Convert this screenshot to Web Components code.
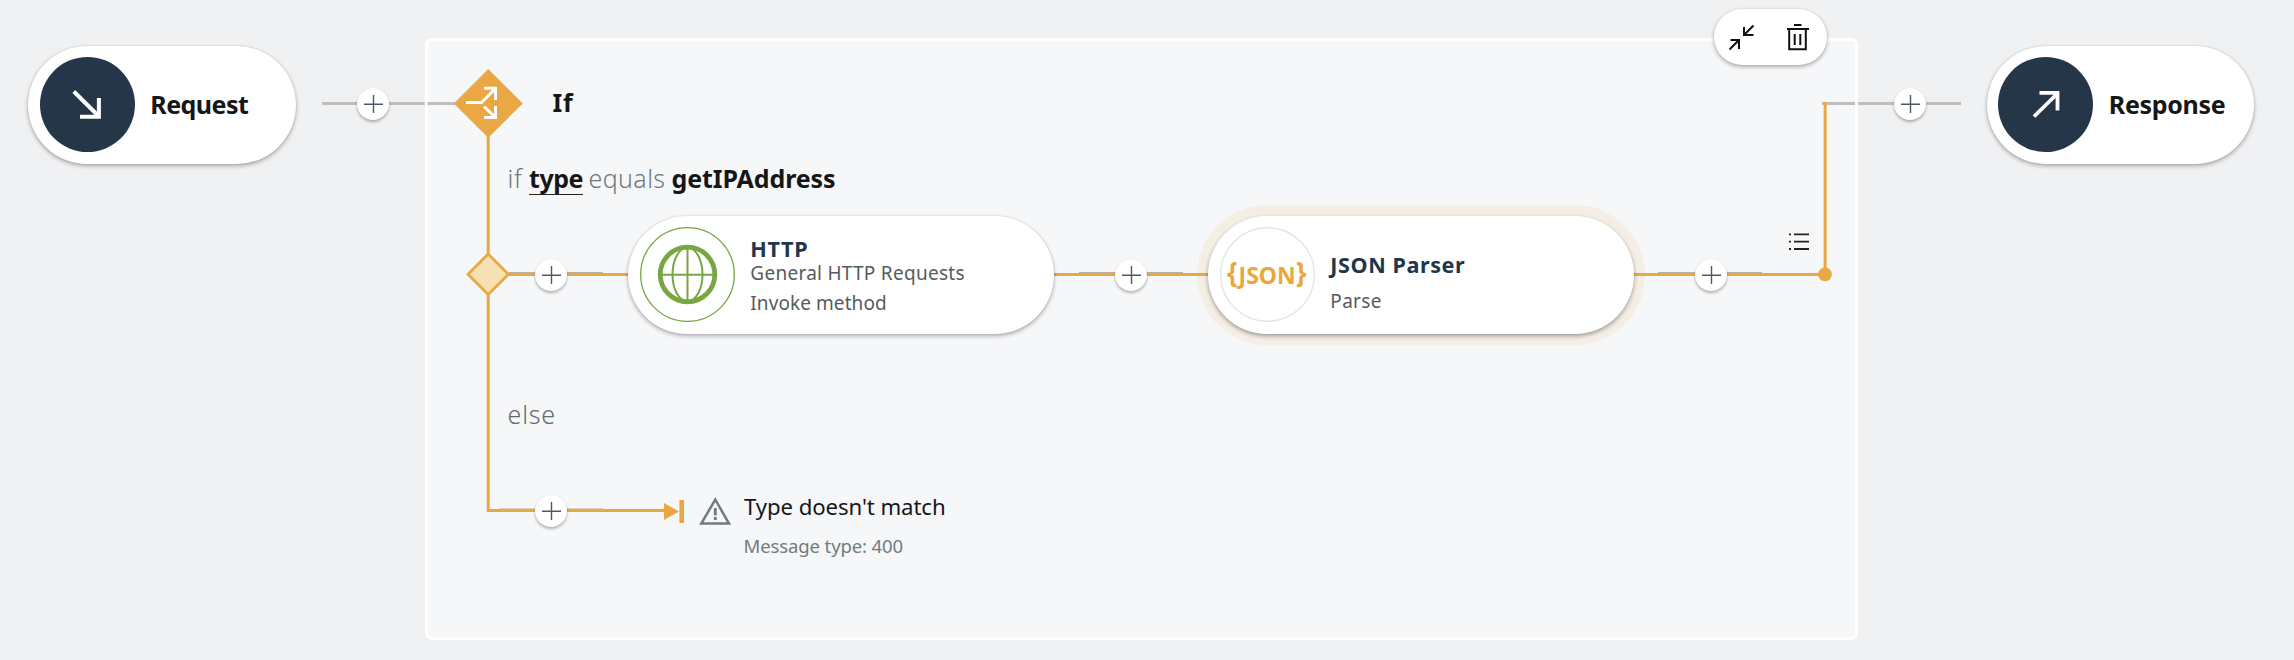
<!DOCTYPE html>
<html lang="en">
<head>
<meta charset="utf-8">
<title>Flow editor</title>
<style>
html,body{margin:0;background:#f0f1f3;}
body{width:2294px;height:660px;overflow:hidden;font-family:"Noto Sans",sans-serif;}
</style>
</head>
<body>
<flow-canvas>
  <flow-frame style="left:424.5px;top:38.3px;width:1433.5px;height:601.7px"></flow-frame>
  <flow-halo style="left:1197px;top:205px;width:447.5px;height:140px"></flow-halo>
  <flow-wires></flow-wires>

  <flow-node style="left:28px;top:46px;width:268px" kind="request">
    <fit-text size="25" w="98" weight="700" style="color:#161616;margin-top:46.4px">Request</fit-text>
  </flow-node>
  <flow-node style="left:1986.5px;top:46px;width:267.5px" kind="response">
    <fit-text size="25" w="116.5" weight="700" style="color:#161616;margin-top:46.4px">Response</fit-text>
  </flow-node>
  <flow-node style="left:628px;top:216px;width:425.5px" kind="http">
    <fit-text size="21.6" w="58" weight="700" style="color:#22364a;margin-top:22.2px">HTTP</fit-text>
    <fit-text size="19" w="214.5" style="color:#565b5c;margin-top:4px">General HTTP Requests</fit-text>
    <fit-text size="19" w="136.5" style="color:#565b5c;margin-top:11px">Invoke method</fit-text>
  </flow-node>
  <flow-node style="left:1208px;top:216px;width:425.5px" kind="json" selected>
    <fit-text size="21.6" w="135" weight="700" style="color:#22364a;margin-top:38px">JSON Parser</fit-text>
    <fit-text size="19" w="51.5" style="color:#565b5c;margin-top:16.4px">Parse</fit-text>
  </flow-node>

  <fit-text at style="left:552.5px;top:89.8px;color:#161616" size="25" w="21" weight="700">If</fit-text>
  <fit-text at style="left:507.5px;top:166px;color:#6f7979" size="25" w="15" weight="300">if</fit-text>
  <fit-text at style="left:529px;top:166px;color:#161616" size="25" w="54" weight="700" line>type</fit-text>
  <fit-text at style="left:588.5px;top:166px;color:#6f7979" size="25" w="77" weight="300">equals</fit-text>
  <fit-text at style="left:671.5px;top:166px;color:#161616" size="25" w="164" weight="700">getIPAddress</fit-text>
  <fit-text at style="left:507.5px;top:402.2px;color:#626c6c" size="25" w="48.5" weight="350">else</fit-text>
  <fit-text at style="left:744px;top:496.2px;color:#161616" size="22.2" w="201.5">Type doesn't match</fit-text>
  <fit-text at style="left:743.5px;top:536.8px;color:#727c7c" size="18.6" w="159.5">Message type: 400</fit-text>

  <add-step style="left:356.8px;top:88px"></add-step>
  <add-step style="left:1893.8px;top:88px"></add-step>
  <add-step style="left:535px;top:258.5px"></add-step>
  <add-step style="left:1115px;top:258.5px"></add-step>
  <add-step style="left:1694.5px;top:258.5px"></add-step>
  <add-step style="left:535px;top:495px"></add-step>
  <flow-toolbar style="left:1714px;top:9px"></flow-toolbar>
</flow-canvas>

<script>
function define(name, html, init) {
  const template = document.createElement('template');
  template.innerHTML = html;
  customElements.define(name, class extends HTMLElement {
    connectedCallback() {
      if (this.shadowRoot) return;
      this.attachShadow({mode: 'open'}).append(template.content.cloneNode(true));
      if (init) init(this, this.shadowRoot);
    }
  });
}

define('flow-canvas', `<style>:host{display:block;position:relative;width:2294px;height:660px;overflow:hidden}</style><slot></slot>`);

define('flow-frame', `<style>:host{position:absolute;box-sizing:border-box;display:block;background:#f6f7f9;border:3px solid #fff;border-radius:7px}</style>`);

define('flow-halo', `<style>:host{position:absolute;display:block;background:#f5eee4;border-radius:70px}</style>`);

define('flow-wires', `<style>:host{position:absolute;inset:0;display:block}svg{display:block}</style>
<svg width="2294" height="660" viewBox="0 0 2294 660" fill="none">
  <path d="M322 103.5H424.7M427.5 103.5H460M1822 103.5H1855M1858 103.5H1961" stroke="#bebebe" stroke-width="3"/>
  <path d="M488.2 130V510.6H666M505 274.4H630M1050 274.4H1210M1630 274.4H1825M1825.1 102V274.4" stroke="#e9a844" stroke-width="3"/>
  <path d="M509 272.5H603M1079 272.5H1183M1658 272.5H1762M499 509H603" stroke="#b9b0a1" stroke-width="1"/>
  <circle cx="1825" cy="274.4" r="6.8" fill="#e9a844"/>
  <path d="M488.2 69L522.8 103.4L488.2 137.8L453.8 103.4Z" fill="#e9a844"/>
  <path d="M466 102.6H481.5L495.5 88.5M484 88.2H495.5V100M484 106.5L495.5 117.5M484 117.6H495.5V106" stroke="#fff" stroke-width="3"/>
  <path d="M488.2 254L508.4 274.3L488.2 294.6L468 274.3Z" fill="#f8e0b5" stroke="#e9a844" stroke-width="2.8"/>
  <path d="M664 503L679 511.5L664 520Z" fill="#e9a844"/>
  <path d="M681.7 500V523" stroke="#e9a844" stroke-width="4.6"/>
  <path d="M715.3 499.5L729 523.6H701.3Z" stroke="#727c7c" stroke-width="2.5"/>
  <path d="M715.3 508V515.5M715.3 517V520" stroke="#727c7c" stroke-width="2.8"/>
  <path d="M1789 234.4h2M1794 234.4h15M1789 241.6h2M1794 241.6h15M1789 249h2M1794 249h15" stroke="#222" stroke-width="1.8"/>
</svg>`);

define('fit-text', `<style>
:host{display:block;white-space:nowrap}
:host([at]){position:absolute}
span{display:inline-block;vertical-align:top}
:host([line]) span{border-bottom:1.6px solid #222;padding-bottom:3px}
</style><span><slot></slot></span>`, (el, root) => {
  const size = +el.getAttribute('size');
  const span = root.querySelector('span');
  el.style.fontSize = size + 'px';
  el.style.lineHeight = size + 'px';
  el.style.fontWeight = el.getAttribute('weight') || 400;
  const natural = span.getBoundingClientRect().width;
  const count = el.textContent.length;
  el.style.letterSpacing = ((+el.getAttribute('w') - natural) / count).toFixed(3) + 'px';
});

const icons = {
  request: `<circle cx="47.5" cy="47.5" r="47.5" fill="#243648"/><path d="M33.8 34.5L59 59.5M40 59.7H58.9V41" stroke="#fff" stroke-width="4"/>`,
  response: `<circle cx="47.5" cy="47.5" r="47.5" fill="#243648"/><path d="M36 59.5L60 36M41.5 35.8H59.5V53.5" stroke="#fff" stroke-width="3.8"/>`,
  http: `<g stroke="#78a642"><circle cx="47.5" cy="47.5" r="46.8" stroke-width="1.3"/><circle cx="47.5" cy="47.5" r="27.3" stroke-width="4.8"/><ellipse cx="47.5" cy="47.5" rx="15" ry="27" stroke-width="2"/><path d="M47.5 20V75M20 47.7H75" stroke-width="2"/></g>`,
  json: `<circle cx="47.5" cy="47.5" r="46.8" stroke="#e1e6ea" stroke-width="1.4"/><g fill="#e9a83c" font-family="Noto Sans,sans-serif" font-weight="700"><text x="7" y="56" font-size="29" textLength="10.5" lengthAdjust="spacingAndGlyphs">{</text><text x="18.6" y="57" font-size="22.5" textLength="57" lengthAdjust="spacingAndGlyphs">JSON</text><text x="76" y="56" font-size="29" textLength="10.5" lengthAdjust="spacingAndGlyphs">}</text></g>`
};
define('flow-node', `<style>
:host{position:absolute;box-sizing:border-box;display:flex;height:118px;border-radius:59px;background:#fff;padding:0 11.5px;gap:15.8px;box-shadow:0 2px 4px rgba(0,0,0,.3),0 0 2px rgba(0,0,0,.12)}
:host([selected]){box-shadow:0 2px 4px rgba(0,0,0,.36)}
svg{flex:none;display:block;margin-top:11px}
</style><svg width="95" height="95" fill="none"></svg><div><slot></slot></div>`, (el, root) => {
  root.querySelector('svg').innerHTML = icons[el.getAttribute('kind')];
});

define('add-step', `<style>:host{position:absolute;display:block;width:32px;height:32px;border-radius:50%;background:#fff;box-shadow:0 2px 3px rgba(0,0,0,.28),0 0 1px rgba(0,0,0,.1)}svg{display:block}</style>
<svg width="32" height="32"><path d="M7 16.3H26M16.5 7V25" stroke="#4b5968" stroke-width="1.4"/></svg>`);

define('flow-toolbar', `<style>:host{position:absolute;display:flex;align-items:center;width:113px;height:56px;border-radius:28px;background:#fff;box-shadow:0 2px 4px rgba(0,0,0,.3),0 0 2px rgba(0,0,0,.1);padding-left:15px;box-sizing:border-box;gap:28px}svg{display:block}</style>
<svg width="26" height="28" fill="none" stroke="#111" stroke-width="2"><path d="M24.5 2.5L15 12M15 4V12H24.5M.5 26.5L10 17M1.5 17H10V26"/></svg>
<svg width="26" height="28" fill="none" stroke="#111" stroke-width="2"><path d="M11 2H18.5M4 6H26M6.2 6V26.3H22.8V6M11.7 11V22M17.3 11V22"/></svg>`);
</script>
</body>
</html>
